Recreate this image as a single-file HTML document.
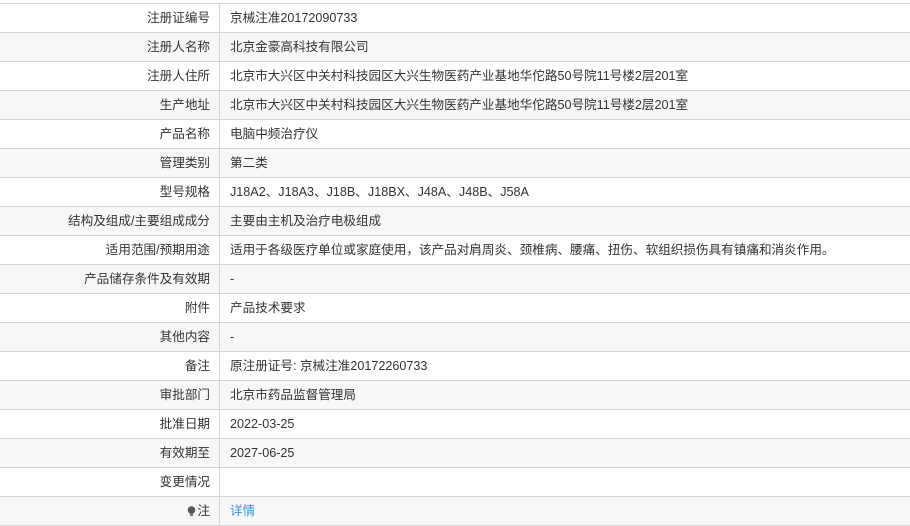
<!DOCTYPE html>
<html><head><meta charset="utf-8"><style>
body{margin:0;background:#fff;width:910px;height:524px;overflow:hidden;font-family:"Liberation Sans","Noto Sans CJK SC",sans-serif;font-size:12.6px;color:#333}
table{position:absolute;top:3px;left:0;width:910px;border-collapse:collapse}
td{height:27px;border-top:1px solid #d4d4d4;border-bottom:1px solid #d4d4d4;padding:1px 0 0 0;line-height:27px;white-space:nowrap}
td.l{width:210px;text-align:right;padding-right:9px;border-right:1px solid #d4d4d4}
td.v{padding-left:10px}
tr:nth-child(even) td{background:#f7f7f7}
a{color:#3c8fdc;text-decoration:none}
.b{display:inline-block;width:9px;height:10px;vertical-align:-1px;margin-right:1px}
</style></head><body>
<table>
<tr><td class="l">注册证编号</td><td class="v">京械注准20172090733</td></tr>
<tr><td class="l">注册人名称</td><td class="v">北京金豪高科技有限公司</td></tr>
<tr><td class="l">注册人住所</td><td class="v">北京市大兴区中关村科技园区大兴生物医药产业基地华佗路50号院11号楼2层201室</td></tr>
<tr><td class="l">生产地址</td><td class="v">北京市大兴区中关村科技园区大兴生物医药产业基地华佗路50号院11号楼2层201室</td></tr>
<tr><td class="l">产品名称</td><td class="v">电脑中频治疗仪</td></tr>
<tr><td class="l">管理类别</td><td class="v">第二类</td></tr>
<tr><td class="l">型号规格</td><td class="v">J18A2、J18A3、J18B、J18BX、J48A、J48B、J58A</td></tr>
<tr><td class="l">结构及组成/主要组成成分</td><td class="v">主要由主机及治疗电极组成</td></tr>
<tr><td class="l">适用范围/预期用途</td><td class="v">适用于各级医疗单位或家庭使用，该产品对肩周炎、颈椎病、腰痛、扭伤、软组织损伤具有镇痛和消炎作用。</td></tr>
<tr><td class="l">产品储存条件及有效期</td><td class="v">-</td></tr>
<tr><td class="l">附件</td><td class="v">产品技术要求</td></tr>
<tr><td class="l">其他内容</td><td class="v">-</td></tr>
<tr><td class="l">备注</td><td class="v">原注册证号: 京械注准20172260733</td></tr>
<tr><td class="l">审批部门</td><td class="v">北京市药品监督管理局</td></tr>
<tr><td class="l">批准日期</td><td class="v">2022-03-25</td></tr>
<tr><td class="l">有效期至</td><td class="v">2027-06-25</td></tr>
<tr><td class="l">变更情况</td><td class="v"></td></tr>
<tr><td class="l"><svg class="b" viewBox="0 0 9 10"><circle cx="4.5" cy="4" r="3.8" fill="#555"/><rect x="3" y="7.5" width="3" height="2.5" fill="#777"/></svg>注</td><td class="v"><a>详情</a></td></tr>
</table>
</body></html>
